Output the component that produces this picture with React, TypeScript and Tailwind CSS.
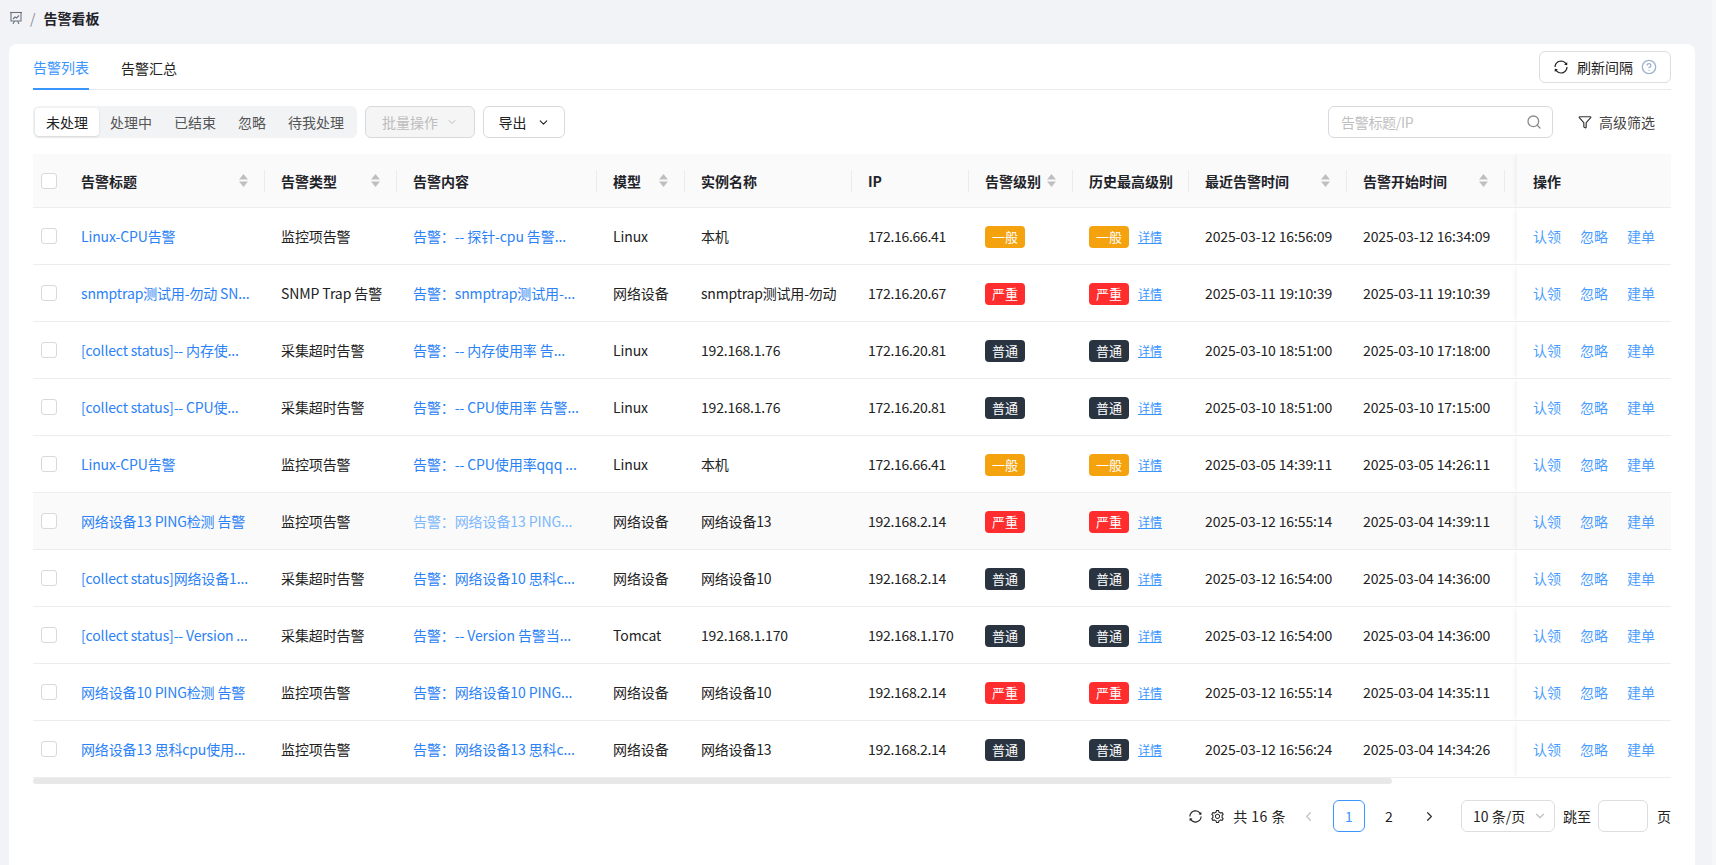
import { ChevronDown, ChevronLeft, ChevronRight, CircleHelp, Funnel, Search } from "lucide-react";
import { AiOutlineSetting, AiOutlineSync } from "react-icons/ai";

type Level = "一般" | "严重" | "普通";
type Row = {
  title: string;
  type: string;
  content: string;
  model: string;
  instance: string;
  ip: string;
  level: Level;
  last: string;
  start: string;
};

const rows: Row[] = [
  { title: "Linux-CPU告警", type: "监控项告警", content: "告警：-- 探针-cpu 告警...", model: "Linux", instance: "本机", ip: "172.16.66.41", level: "一般", last: "2025-03-12 16:56:09", start: "2025-03-12 16:34:09" },
  { title: "snmptrap测试用-勿动 SN...", type: "SNMP Trap 告警", content: "告警：snmptrap测试用-...", model: "网络设备", instance: "snmptrap测试用-勿动", ip: "172.16.20.67", level: "严重", last: "2025-03-11 19:10:39", start: "2025-03-11 19:10:39" },
  { title: "[collect status]-- 内存使...", type: "采集超时告警", content: "告警：-- 内存使用率 告...", model: "Linux", instance: "192.168.1.76", ip: "172.16.20.81", level: "普通", last: "2025-03-10 18:51:00", start: "2025-03-10 17:18:00" },
  { title: "[collect status]-- CPU使...", type: "采集超时告警", content: "告警：-- CPU使用率 告警...", model: "Linux", instance: "192.168.1.76", ip: "172.16.20.81", level: "普通", last: "2025-03-10 18:51:00", start: "2025-03-10 17:15:00" },
  { title: "Linux-CPU告警", type: "监控项告警", content: "告警：-- CPU使用率qqq ...", model: "Linux", instance: "本机", ip: "172.16.66.41", level: "一般", last: "2025-03-05 14:39:11", start: "2025-03-05 14:26:11" },
  { title: "网络设备13 PING检测 告警", type: "监控项告警", content: "告警：网络设备13 PING...", model: "网络设备", instance: "网络设备13", ip: "192.168.2.14", level: "严重", last: "2025-03-12 16:55:14", start: "2025-03-04 14:39:11" },
  { title: "[collect status]网络设备1...", type: "采集超时告警", content: "告警：网络设备10 思科c...", model: "网络设备", instance: "网络设备10", ip: "192.168.2.14", level: "普通", last: "2025-03-12 16:54:00", start: "2025-03-04 14:36:00" },
  { title: "[collect status]-- Version ...", type: "采集超时告警", content: "告警：-- Version 告警当...", model: "Tomcat", instance: "192.168.1.170", ip: "192.168.1.170", level: "普通", last: "2025-03-12 16:54:00", start: "2025-03-04 14:36:00" },
  { title: "网络设备10 PING检测 告警", type: "监控项告警", content: "告警：网络设备10 PING...", model: "网络设备", instance: "网络设备10", ip: "192.168.2.14", level: "严重", last: "2025-03-12 16:55:14", start: "2025-03-04 14:35:11" },
  { title: "网络设备13 思科cpu使用...", type: "监控项告警", content: "告警：网络设备13 思科c...", model: "网络设备", instance: "网络设备13", ip: "192.168.2.14", level: "普通", last: "2025-03-12 16:56:24", start: "2025-03-04 14:34:26" },
];

const columns: { label: string; sort: boolean }[] = [
  { label: "告警标题", sort: true },
  { label: "告警类型", sort: true },
  { label: "告警内容", sort: false },
  { label: "模型", sort: true },
  { label: "实例名称", sort: false },
  { label: "IP", sort: false },
  { label: "告警级别", sort: true },
  { label: "历史最高级别", sort: false },
  { label: "最近告警时间", sort: true },
  { label: "告警开始时间", sort: true },
];

const levelClass: Record<Level, string> = {
  一般: "bg-[#f5a20f]",
  严重: "bg-[#ff2d2d]",
  普通: "bg-[#2a3441]",
};

const segments = [
  { label: "未处理", width: "w-[64px]" },
  { label: "处理中", width: "w-[64px]" },
  { label: "已结束", width: "w-[64px]" },
  { label: "忽略", width: "w-[50px]" },
  { label: "待我处理", width: "w-[78px]" },
];

function Tag({ level }: { level: Level }) {
  return (
    <span className={`inline-flex h-[22px] w-[40px] items-center justify-center rounded text-[13px] text-white ${levelClass[level]}`}>
      {level}
    </span>
  );
}

function SortIcon() {
  return (
    <svg width="9" height="13" viewBox="0 0 9 13" className="shrink-0 fill-[#bfbfbf]">
      <path d="M4.5 0 9 5.5H0z" />
      <path d="M0 7.5h9L4.5 13z" />
    </svg>
  );
}

function Checkbox() {
  return <span className="block h-4 w-4 rounded-[3px] border border-[#d9d9d9] bg-white" />;
}

function BoardIcon() {
  return (
    <svg width="14" height="14" viewBox="0 0 14 14" fill="none" stroke="#6b7280" strokeWidth="1.1">
      <path d="M1 1.5h12" />
      <path d="M2 1.5v8.5h10V1.5" />
      <path d="M4 8l2-2 1.5 1L10 4.5" />
      <path d="M5.5 10 4 13M8.5 10l1.5 3" />
    </svg>
  );
}

export default function App() {
  return (
    <div className="flex h-[865px] w-[1716px] overflow-hidden bg-[#f2f3f7] font-['Noto_Sans_CJK_SC','Noto_Sans',sans-serif] text-sm text-[#222]">
      <div className="flex min-w-0 flex-1 flex-col pl-[9px] pr-[17px]">
        {/* Breadcrumb */}
        <div className="flex h-[44px] shrink-0 items-center pb-[8px]">
          <BoardIcon />
          <span className="ml-[7px] text-[#8a8f99]">/</span>
          <span className="ml-[8px] font-semibold text-[#1f2329]">告警看板</span>
        </div>

        <div className="flex-1 rounded-t-lg bg-white px-6">
          {/* Tabs */}
          <div className="flex h-[46px] items-center justify-between border-b border-[#e9eaee]">
            <div className="flex h-full gap-8">
              <div className="flex h-[46px] items-center border-b-2 border-[#3a96ff] pt-[2px] text-[#3a96ff]">告警列表</div>
              <div className="flex items-center pt-[2px]">告警汇总</div>
            </div>
            <button className="flex h-[32px] w-[132px] items-center justify-center gap-[8px] rounded-md border border-[#dcdde1]">
              <AiOutlineSync size={16} />
              <span>刷新间隔</span>
              <CircleHelp size={16} className="text-[#9fb2cc]" />
            </button>
          </div>

          {/* Toolbar */}
          <div className="mt-[16px] flex h-[32px] items-center justify-between">
            <div className="flex items-center gap-2">
              <div className="flex h-[32px] rounded-md bg-[#f2f3f5] p-[2px]">
                {segments.map((s, i) => (
                  <div
                    key={s.label}
                    className={`flex items-center justify-center rounded ${s.width} ${i === 0 ? "bg-white text-[#222] shadow-sm" : "text-[#555]"}`}
                  >
                    {s.label}
                  </div>
                ))}
              </div>
              <button className="flex h-[32px] w-[110px] items-center justify-center gap-[8px] rounded-md border border-[#d9d9dd] bg-[#f5f5f5] text-[#bdbdbd]">
                批量操作
                <ChevronDown size={12} />
              </button>
              <button className="flex h-[32px] w-[82px] items-center justify-center gap-[10px] rounded-md border border-[#d9d9dd]">
                导出
                <ChevronDown size={13} />
              </button>
            </div>
            <div className="flex items-center">
              <div className="flex h-[32px] w-[225px] items-center justify-between rounded-md border border-[#d9d9dd] pl-[12px] pr-[10px] text-[#bfbfbf]">
                <span className="tracking-[-0.3px]">告警标题/IP</span>
                <Search size={16} className="text-[#8c8c8c]" />
              </div>
              <div className="ml-[25px] mr-4 flex items-center gap-[7px] text-[#444]">
                <Funnel size={14} className="text-[#333]" />
                高级筛选
              </div>
            </div>
          </div>

          {/* Table */}
          <table className="mt-[16px] w-[1638px] table-fixed border-separate border-spacing-0">
            <colgroup>
              {[32, 200, 132, 200, 88, 167, 117, 104, 116, 158, 158, 12, 154].map((w, i) => (
                <col key={i} style={{ width: w }} />
              ))}
            </colgroup>
            <thead>
              <tr className="h-[54px] bg-[#fafafa] text-left font-semibold text-[#1f2329]">
                <th className="border-b border-[#ededed] pl-2">
                  <Checkbox />
                </th>
                {columns.map((c) => (
                  <th key={c.label} className="relative border-b border-[#ededed] pl-4 pr-[17px] font-semibold">
                    <div className="flex items-center justify-between whitespace-nowrap">
                      {c.label}
                      {c.sort && <SortIcon />}
                    </div>
                    <span className="absolute right-0 top-[16px] h-[22px] w-px bg-[#ececec]" />
                  </th>
                ))}
                <th className="border-b border-[#ededed]" />
                <th className="border-b border-[#ededed] pl-4 font-semibold shadow-[-4px_0_4px_-2px_rgba(0,0,0,0.05)]">操作</th>
              </tr>
            </thead>
            <tbody>
              {rows.map((r, i) => (
                <tr key={i} className={`h-[57px] ${i === 5 ? "bg-[#fafafa]" : ""}`}>
                  <td className="border-b border-[#ededed] pl-2">
                    <Checkbox />
                  </td>
                  <td className="whitespace-nowrap border-b border-[#ededed] pl-4 tracking-[-0.15px] text-[#2b82f6]">{r.title}</td>
                  <td className="whitespace-nowrap border-b border-[#ededed] pl-4 tracking-[-0.1px]">{r.type}</td>
                  <td className={`whitespace-nowrap border-b border-[#ededed] pl-4 tracking-[-0.1px] ${i === 5 ? "text-[#7db8fb]" : "text-[#2b82f6]"}`}>{r.content}</td>
                  <td className="whitespace-nowrap border-b border-[#ededed] pl-4 tracking-[-0.1px]">{r.model}</td>
                  <td className="whitespace-nowrap border-b border-[#ededed] pl-4 tracking-[-0.2px]">{r.instance}</td>
                  <td className="whitespace-nowrap border-b border-[#ededed] pl-4 tracking-[-0.3px]">{r.ip}</td>
                  <td className="border-b border-[#ededed] pl-4 pt-[2px]">
                    <Tag level={r.level} />
                  </td>
                  <td className="border-b border-[#ededed] pl-4 pt-[2px]">
                    <div className="flex items-center gap-[9px]">
                      <Tag level={r.level} />
                      <span className="text-xs text-[#3a96ff] underline">详情</span>
                    </div>
                  </td>
                  <td className="whitespace-nowrap border-b border-[#ededed] pl-4 tracking-[-0.12px]">{r.last}</td>
                  <td className="whitespace-nowrap border-b border-[#ededed] pl-4 tracking-[-0.12px]">{r.start}</td>
                  <td className="border-b border-[#ededed]" />
                  <td className="border-b border-[#ededed] pl-4 text-[#4a9dff] shadow-[-4px_0_4px_-2px_rgba(0,0,0,0.05)]">
                    <div className="flex gap-[19px]">
                      <span>认领</span>
                      <span>忽略</span>
                      <span>建单</span>
                    </div>
                  </td>
                </tr>
              ))}
            </tbody>
          </table>

          {/* Horizontal scrollbar */}
          <div className="h-[7px] w-[1638px]">
            <div className="h-[6px] w-[1359px] rounded-full bg-[#e8e8e8]" />
          </div>

          {/* Pagination */}
          <div className="mt-[15px] flex h-[32px] w-[1638px] items-center justify-end">
            <AiOutlineSync size={15} />
            <AiOutlineSetting size={15} className="ml-[7px]" />
            <span className="ml-[8px] tracking-[0.5px]">共 16 条</span>
            <ChevronLeft size={15} className="ml-[15px] text-[#c4c4c4]" />
            <div className="ml-[17px] flex h-[32px] w-[32px] items-center justify-center rounded-md border border-[#3a96ff] text-[#3a96ff]">1</div>
            <div className="ml-[8px] flex h-[32px] w-[32px] items-center justify-center">2</div>
            <ChevronRight size={15} className="ml-[17px] text-[#333]" />
            <div className="ml-[24px] flex h-[32px] w-[94px] items-center justify-between rounded-md border border-[#dcdde1] pl-[11px] pr-[7px]">
              <span className="whitespace-nowrap">10 条/页</span>
              <ChevronDown size={14} className="text-[#bfbfbf]" />
            </div>
            <span className="ml-[8px] whitespace-nowrap">跳至</span>
            <div className="ml-[7px] h-[32px] w-[50px] rounded-md border border-[#dcdde1]" />
            <span className="ml-[9px]">页</span>
          </div>
        </div>
      </div>
      <div className="w-[4px] shrink-0 bg-[#f6f7f9]" />
    </div>
  );
}
